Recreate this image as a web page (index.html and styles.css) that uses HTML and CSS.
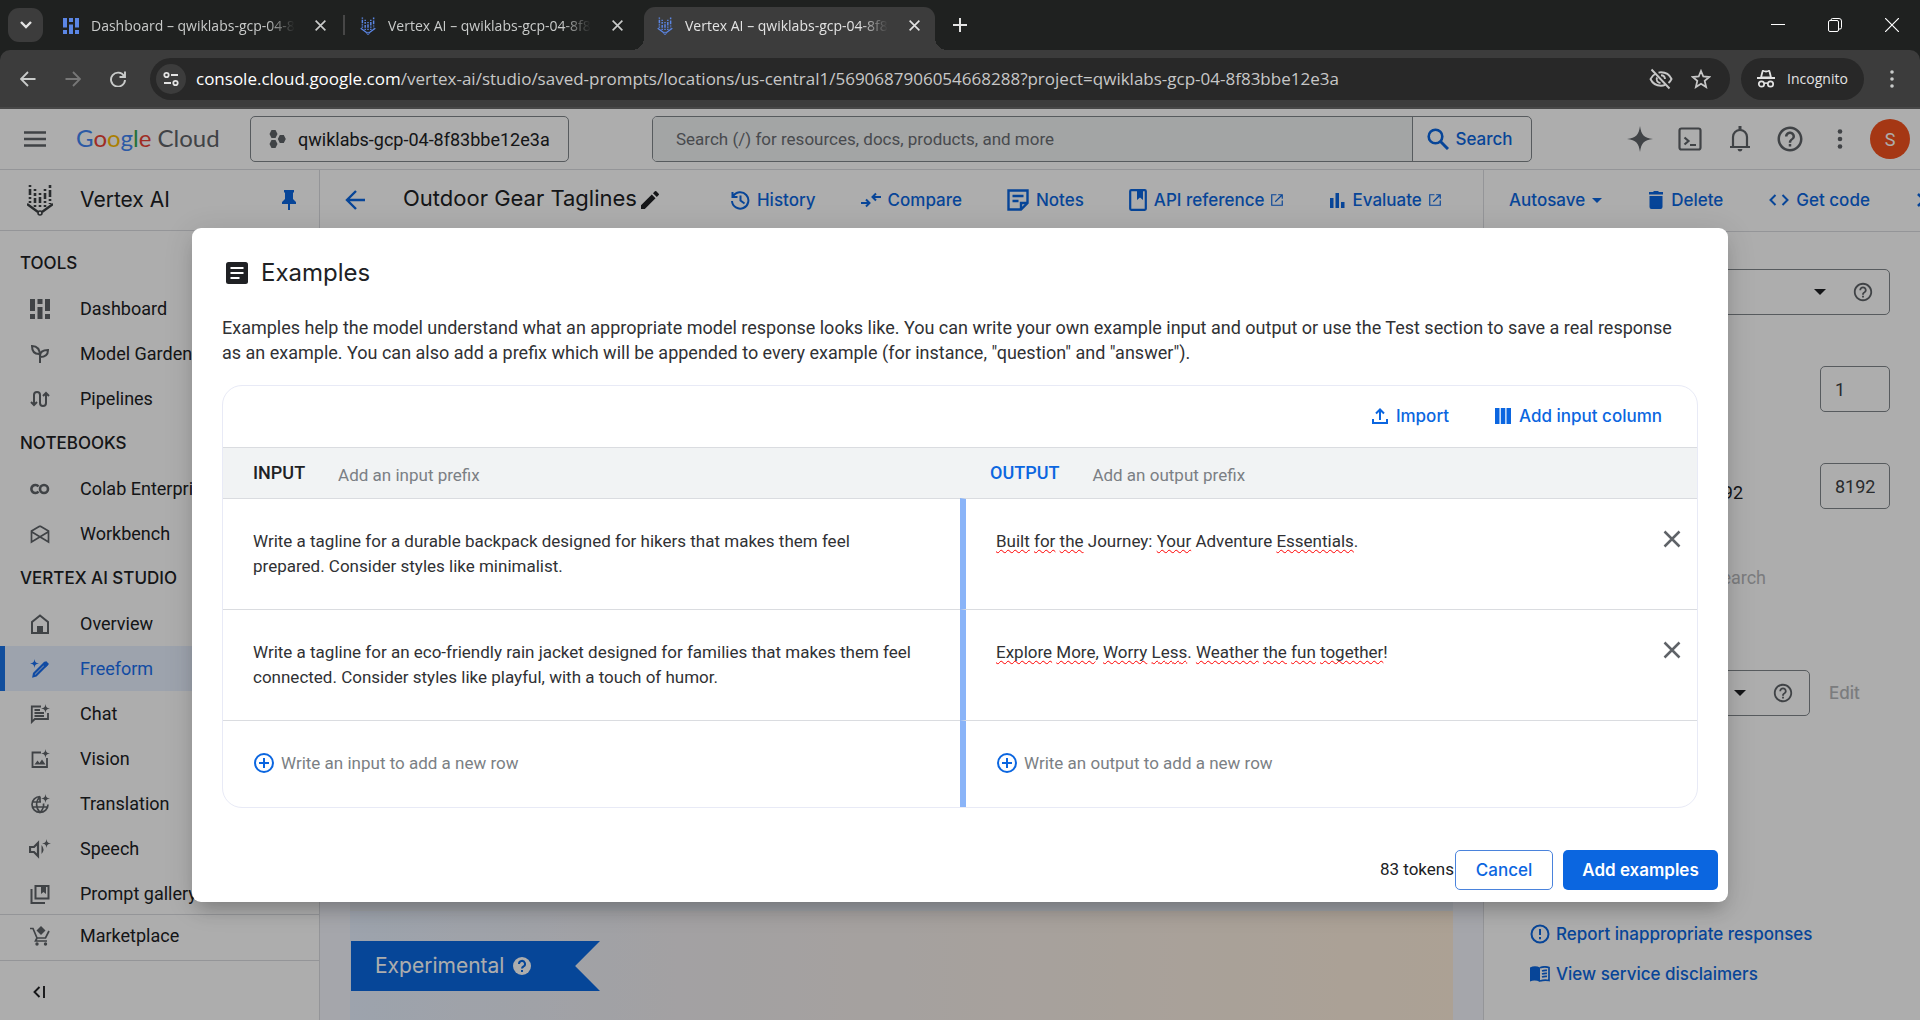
FILE: index.html
```html
<!DOCTYPE html>
<html lang="en">
<head>
<meta charset="utf-8">
<title>Vertex AI – qwiklabs-gcp-04-8f83bbe12e3a</title>
<link rel="stylesheet" href="styles.css">
</head>
<body>
<svg class="sprite" aria-hidden="true">
  <symbol id="i-x" viewBox="0 0 16 16"><path d="M2 2l12 12M14 2L2 14" fill="none" stroke="currentColor" stroke-width="2"/></symbol>
  <symbol id="i-help" viewBox="0 0 24 24"><path fill="currentColor" d="M11 18h2v-2h-2v2zm1-16C6.480 2 2 6.480 2 12s4.480 10 10 10 10-4.480 10-10S17.520 2 12 2zm0 18c-4.410 0-8-3.590-8-8s3.590-8 8-8 8 3.590 8 8-3.590 8-8 8zm0-14c-2.210 0-4 1.790-4 4h2c0-1.100.9-2 2-2s2 .9 2 2c0 2-3 1.750-3 5h2c0-2.250 3-2.500 3-5 0-2.210-1.790-4-4-4z"/></symbol>
  <symbol id="i-open" viewBox="0 0 24 24"><path fill="currentColor" d="M20 20H4V4h7V2H2v20h20v-9h-2v7zM14 2v2h4.600L8.300 14.300l1.400 1.400L20 5.400V10h2V2h-8z"/></symbol>
  <symbol id="i-caret" viewBox="0 0 12 6"><path fill="currentColor" d="M0 0h12L6 6z"/></symbol>
  <symbol id="i-plus" viewBox="0 0 20 20"><circle cx="10" cy="10" r="9" fill="none" stroke="currentColor" stroke-width="2"/><path d="M10 5v10M5 10h10" stroke="currentColor" stroke-width="2"/></symbol>
  <symbol id="i-dash" viewBox="0 0 20 20"><path fill="currentColor" d="M0 0h5v12H0zM0 15h5v5H0zM7.500 0h5v5h-5zM7.500 8h5v12h-5zM15 0h5v12h-5zM15 15h5v5h-5z"/></symbol>
  <symbol id="i-vertex" viewBox="0 0 26 32"><g fill="none" stroke="currentColor" stroke-width="2.600"><path d="M3 1v19" stroke-dasharray="2 2 6 2 2 2 2 2"/><path d="M8 5v18" stroke-dasharray="2 2 3 2 5 2"/><path d="M13 9v15" stroke-dasharray="2 2 6 2"/><path d="M18 5v18" stroke-dasharray="2 2 6 2 2 2"/><path d="M23 1v19" stroke-dasharray="3 2 7 2 2 2"/><path d="M0 20l11 8M26 20l-11 8" stroke-width="2.400"/><circle cx="13" cy="29" r="2" stroke-width="1.600"/></g></symbol>
  <symbol id="i-spark" viewBox="0 0 10 10"><path fill="currentColor" d="M5 0C5.500 3.500 6.500 4.500 10 5 6.500 5.500 5.500 6.500 5 10 4.500 6.500 3.500 5.500 0 5 3.500 4.500 4.500 3.500 5 0z"/></symbol>
</svg>

<header class="browser">
  <div class="tabstrip">
    <button class="tab-search" aria-label="Search tabs"><svg width="12" height="8" viewBox="0 0 12 8"><path d="M1 1l5 5 5-5" fill="none" stroke="currentColor" stroke-width="2.400"/></svg></button>
    <div class="tabs">
      <div class="tab"><svg class="fav" width="16" height="18"><use href="#i-dash"/></svg><span class="tab-title">Dashboard – qwiklabs-gcp-04-8</span><button aria-label="Close tab"><svg width="13" height="13"><use href="#i-x"/></svg></button></div>
      <div class="tab divided"><svg class="fav" width="16" height="18"><use href="#i-vertex"/></svg><span class="tab-title">Vertex AI – qwiklabs-gcp-04-8f8</span><button aria-label="Close tab"><svg width="13" height="13"><use href="#i-x"/></svg></button></div>
      <div class="tab active"><svg class="fav" width="16" height="18"><use href="#i-vertex"/></svg><span class="tab-title">Vertex AI – qwiklabs-gcp-04-8f8</span><button aria-label="Close tab"><svg width="13" height="13"><use href="#i-x"/></svg></button></div>
    </div>
    <button class="new-tab" aria-label="New tab"><svg width="14" height="14" viewBox="0 0 14 14"><path d="M7 0v14M0 7h14" stroke="currentColor" stroke-width="2"/></svg></button>
    <div class="window-controls">
      <button aria-label="Minimize"><svg width="14" height="14" viewBox="0 0 14 14"><path d="M0 6.500h14" stroke="currentColor"/></svg></button>
      <button aria-label="Restore"><svg width="14" height="14" viewBox="0 0 14 14"><g fill="none" stroke="currentColor"><rect x=".5" y="2.500" width="10" height="11" rx="1.500"/><path d="M3 2.500V2Q3 .5 4.500 .5H11Q13.500 .5 13.500 3v6.500q0 1.500-1.500 1.500h-1"/></g></svg></button>
      <button aria-label="Close"><svg width="14" height="14" viewBox="0 0 14 14"><path d="M0 0l14 14M14 0L0 14" stroke="currentColor" stroke-width="1.200"/></svg></button>
    </div>
  </div>
  <div class="toolbar">
    <button aria-label="Back"><svg width="16" height="16" viewBox="0 0 16 16"><path d="M15.500 8H1.500M8 1L1 8l7 7" fill="none" stroke="currentColor" stroke-width="1.800"/></svg></button>
    <button aria-label="Forward" disabled><svg width="16" height="16" viewBox="0 0 16 16"><path d="M.5 8h14M8 1l7 7-7 7" fill="none" stroke="currentColor" stroke-width="1.800"/></svg></button>
    <button aria-label="Reload"><svg width="16" height="16" viewBox="0 0 16 16"><path d="M14 5A7 7 0 1 0 15 9M15 .5V6H9.500" fill="none" stroke="currentColor" stroke-width="1.900"/></svg></button>
    <div class="omnibox">
      <button class="site-info" aria-label="Site information"><svg width="16" height="16" viewBox="0 0 16 16"><g fill="none" stroke="currentColor" stroke-width="1.800"><circle cx="3.500" cy="4" r="2.200"/><path d="M8 4h7M1 12h7"/><circle cx="12.500" cy="12" r="2.200"/></g></svg></button>
      <span class="url"><b>console.cloud.google.com</b>/vertex-ai/studio/saved-prompts/locations/us-central1/5690687906054668288?project=qwiklabs-gcp-04-8f83bbe12e3a</span>
      <button aria-label="Third-party cookies blocked"><svg width="24" height="22" viewBox="0 0 24 22"><g fill="none" stroke="currentColor" stroke-width="1.900"><path d="M7 5.500C4.500 6.700 2.500 8.600 1.500 11c1.800 4 5.800 6.700 10.500 6.700 1.600 0 3-.3 4.300-.8M9.500 4.600c.8-.2 1.600-.3 2.500-.3 4.700 0 8.700 2.700 10.500 6.700-.7 1.600-1.700 2.900-3 4"/><path d="M8 9.500c-1.200 2.600.6 5.300 3.500 5.500M12 7.200c2.300 0 3.900 1.600 4 3.800M2.500 1.500l18 19"/></g></svg></button>
      <button aria-label="Bookmark this tab"><svg width="20" height="20" viewBox="0 0 20 20"><path d="M10 2l2.300 5.500 6 .5-4.600 3.900L15.100 18 10 14.700 4.900 18l1.400-6.100L1.700 8l6-.5z" fill="none" stroke="currentColor" stroke-width="1.800"/></svg></button>
    </div>
    <button class="incognito"><svg width="18" height="18" viewBox="0 0 18 18"><path d="M4 7.500L5.500 1.500q.2-.9 1.200-.6L9 1.500l2.300-.6q1-.3 1.200.6L14 7.500z" fill="none" stroke="currentColor" stroke-width="1.800"/><path d="M0 8h18" stroke="currentColor" stroke-width="2"/><g fill="none" stroke="currentColor" stroke-width="1.700"><circle cx="4.500" cy="14" r="2.700"/><circle cx="13.500" cy="14" r="2.700"/><path d="M7 13.500q2-1 4 0"/></g></svg>Incognito</button>
    <button aria-label="Browser menu"><svg width="4" height="18" viewBox="0 0 4 18"><g fill="currentColor"><circle cx="2" cy="2" r="1.800"/><circle cx="2" cy="9" r="1.800"/><circle cx="2" cy="16" r="1.800"/></g></svg></button>
  </div>
</header>

<div class="page">
  <header class="cloudbar">
    <button class="menu" aria-label="Main menu"><svg width="22" height="16" viewBox="0 0 22 16"><path d="M0 1.500h22M0 8h22M0 14.500h22" stroke="currentColor" stroke-width="2.400"/></svg></button>
    <a class="logo" href="#" aria-label="Google Cloud"><span class="g">G</span><span class="r">o</span><span class="y">o</span><span class="g">g</span><span class="n">l</span><span class="r">e</span> Cloud</a>
    <button class="project"><svg width="17" height="18" viewBox="0 0 17 18"><path fill="currentColor" d="M2.500 0h4L8.500 4l-2 4h-4L.5 4zM2.500 10h4l2 4-2 4h-4l-2-4zM10.800 5h4l2 4-2 4h-4l-2-4z"/></svg>qwiklabs-gcp-04-8f83bbe12e3a</button>
    <form class="search">
      <input type="search" aria-label="Search" placeholder="Search (/) for resources, docs, products, and more">
      <button type="button"><svg width="22" height="22" viewBox="0 0 22 22"><circle cx="8.500" cy="8.500" r="6.800" fill="none" stroke="currentColor" stroke-width="2.600"/><path d="M13 13l8 8" stroke="currentColor" stroke-width="3"/></svg>Search</button>
    </form>
    <div class="utilities">
      <button aria-label="Gemini"><svg width="26" height="28" viewBox="0 0 10 10"><use href="#i-spark"/></svg></button>
      <button aria-label="Cloud Shell"><svg width="24" height="24" viewBox="0 0 24 24"><g fill="none" stroke="currentColor" stroke-width="2.200"><rect x="1.500" y="1.500" width="21" height="21" rx="2"/><path d="M6.500 10.500l4 3.500-4 3.500M12 18h6"/></g></svg></button>
      <button aria-label="Notifications"><svg width="22" height="26" viewBox="0 0 22 26"><path d="M4 21V11a7 7 0 0 1 14 0v10M1 21h20" fill="none" stroke="currentColor" stroke-width="2.200"/><path fill="currentColor" d="M9.500 0h3v4h-3zM8.500 23h5q-.5 2.500-2.500 2.500T8.500 23z"/></svg></button>
      <button aria-label="Help"><svg width="30" height="30"><use href="#i-help"/></svg></button>
      <button aria-label="More options"><svg width="6" height="20" viewBox="0 0 6 20"><g fill="currentColor"><circle cx="3" cy="2.500" r="2.300"/><circle cx="3" cy="10" r="2.300"/><circle cx="3" cy="17.500" r="2.300"/></g></svg></button>
    </div>
    <button class="avatar" aria-label="Account">S</button>
  </header>

  <div class="body">
    <aside class="sidebar">
      <div class="product"><svg width="26" height="32"><use href="#i-vertex"/></svg><h2>Vertex AI</h2><button aria-label="Unpin menu"><svg width="14" height="20" viewBox="0 0 14 20"><path fill="currentColor" d="M2 0h10v2l-1 1v6l3 3v2H8v6H6v-6H0v-2l3-3V3L2 2z"/></svg></button></div>
      <nav>
        <h3>TOOLS</h3>
        <a href="#"><svg width="20" height="20"><use href="#i-dash"/></svg>Dashboard</a>
        <a href="#"><svg width="20" height="20" viewBox="0 0 20 20"><g fill="none" stroke="currentColor" stroke-width="2"><path d="M10 19v-7C10 5 7 2 2 2c0 6 3 8 7 8M10 12c0-4 3-6 8-6 0 5-3 7-8 7"/></g></svg>Model Garden</a>
        <a href="#"><svg width="20" height="20" viewBox="0 0 20 20"><g fill="none" stroke="currentColor" stroke-width="2"><path d="M4 16V6a3 3 0 0 1 6 0v8a3 3 0 0 0 6 0V4M1 13l3 3 3-3M13 7l3-3 3 3"/></g></svg>Pipelines</a>
        <h3>NOTEBOOKS</h3>
        <a href="#"><svg width="20" height="20" viewBox="0 0 20 20"><g fill="none" stroke="currentColor" stroke-width="2.600"><path d="M8.500 7.500A4 4 0 1 0 8.500 12.500"/><circle cx="14" cy="10" r="4"/></g></svg>Colab Enterprise</a>
        <a href="#"><svg width="20" height="20" viewBox="0 0 20 20"><path d="M10 2l8.500 5v11L2 8M10 2L1.500 7v11L18 8" fill="none" stroke="currentColor" stroke-width="1.700"/></svg>Workbench</a>
        <h3>VERTEX AI STUDIO</h3>
        <a href="#"><svg width="20" height="20" viewBox="0 0 20 20"><path d="M2 19V8l8-6.500L18 8v11z" fill="none" stroke="currentColor" stroke-width="2"/><path fill="currentColor" d="M7 12h6v7H7z"/></svg>Overview</a>
        <a href="#" class="current" aria-current="page"><svg width="20" height="20" viewBox="0 0 20 20"><path d="M4 14.500L14.500 4l2 2L6 16.500l-2.500.7z" fill="none" stroke="currentColor" stroke-width="2.200"/><path d="M12.500 5.500L16 2l3 3-3.500 3.500z" fill="currentColor"/><use href="#i-spark" x="0" y="0" width="9" height="9"/></svg>Freeform</a>
        <a href="#"><svg width="20" height="20" viewBox="0 0 20 20"><path d="M11 2.500H1.800V18l3-3H18V9M4.500 6H10M4.500 9H14M4.500 12H14" fill="none" stroke="currentColor" stroke-width="1.800"/><use href="#i-spark" x="11" y="0" width="9" height="9"/></svg>Chat</a>
        <a href="#"><svg width="20" height="20" viewBox="0 0 20 20"><path d="M11 3.500H2.500V18H17V9" fill="none" stroke="currentColor" stroke-width="1.800"/><path d="M4.500 15.500l3-4 2 2.500 2.500-3.500 3.500 5z" fill="currentColor"/><use href="#i-spark" x="11" y="0" width="9" height="9"/></svg>Vision</a>
        <a href="#"><svg width="20" height="20" viewBox="0 0 20 20"><g fill="none" stroke="currentColor" stroke-width="1.700"><path d="M10 2.500a8 8 0 1 0 8 8M2 8h9M2 13h15M10 2.500c-4.500 5-4.500 11 0 16 3-3 4-6 3.500-9M10 2.500V8"/></g><use href="#i-spark" x="11" y="0" width="9" height="9"/></svg>Translation</a>
        <a href="#"><svg class="speech" width="22" height="20" viewBox="0 0 22 20"><path d="M1 8h4l4-4v13l-4-4H1z" fill="none" stroke="currentColor" stroke-width="2.200"/><path d="M12.500 6q4 4.500 0 9z" fill="currentColor"/><use href="#i-spark" x="13" y="0" width="9" height="9"/></svg>Speech</a>
        <a href="#"><svg width="20" height="20" viewBox="0 0 20 20"><path d="M5.500 2h13v12.500h-13zM1.500 5v14H15" fill="none" stroke="currentColor" stroke-width="2"/><path d="M11 2h5v8l-2.500-2L11 10z" fill="currentColor"/></svg>Prompt gallery</a>
      </nav>
      <a href="#" class="market"><svg width="20" height="20" viewBox="0 0 20 20"><path d="M0 2.500h3L7 12h8.500l3.500-7M7 12l-1.500 3H17" fill="none" stroke="currentColor" stroke-width="1.700"/><path d="M11 0l4.500 4.500L11 9 6.500 4.500z" fill="currentColor"/><circle cx="7" cy="18" r="1.700" fill="currentColor"/><circle cx="15.500" cy="18" r="1.700" fill="currentColor"/></svg>Marketplace</a>
      <button class="collapse" aria-label="Collapse menu"><svg width="12" height="12" viewBox="0 0 12 12"><path d="M6.500 1L1.500 6l5 5M11 0v12" fill="none" stroke="currentColor" stroke-width="1.900"/></svg></button>
    </aside>

    <div class="content">
      <div class="actionbar">
        <div class="left">
          <button aria-label="Back" class="back"><svg width="20" height="20" viewBox="0 0 20 20"><path d="M20 10H2M11 1l-9 9 9 9" fill="none" stroke="currentColor" stroke-width="2.400"/></svg></button>
          <h1>Outdoor Gear Taglines</h1>
          <button class="rename" aria-label="Rename"><svg width="18" height="18" viewBox="0 0 18 18"><path fill="currentColor" d="M0 14.200V18h3.800L14.500 7.200l-3.700-3.700zM17.700 4.100q.6-.7 0-1.400L15.300.3q-.7-.6-1.400 0L12 2.200 15.800 6z"/></svg></button>
          <div class="actions">
            <button><svg width="20" height="20" viewBox="0 0 20 20"><path d="M3 6.500A8.200 8.200 0 1 1 2 11M2.500 2v5h5M10.500 5.500v5l4 3" fill="none" stroke="currentColor" stroke-width="2"/></svg>History</button>
            <button><svg width="20" height="16" viewBox="0 0 20 16"><path d="M0 11h8M5 7.500L8.500 11 5 14.500M20 5h-8M15 1.500L11.500 5 15 8.500" fill="none" stroke="currentColor" stroke-width="2"/></svg>Compare</button>
            <button><svg width="22" height="22" viewBox="0 0 22 22"><path d="M14 20.500H1.500v-19h19V14zM14 20.500V14h6.500M5.500 7h11M5.500 12h6" fill="none" stroke="currentColor" stroke-width="2.400"/></svg>Notes</button>
            <button><svg width="18" height="22" viewBox="0 0 18 22"><rect x="1.200" y="1.200" width="15.600" height="19.600" rx="1" fill="none" stroke="currentColor" stroke-width="2.200"/><path d="M8 1h6v10l-3-2.500L8 11z" fill="currentColor"/></svg>API reference<svg class="ext" width="14" height="14"><use href="#i-open"/></svg></button>
            <button><svg width="16" height="16" viewBox="0 0 16 16"><path d="M1 6h3.500v10H1zM6.500 1H10v15H6.500zM12 10h3.500v6H12z" fill="currentColor"/></svg>Evaluate<svg class="ext" width="14" height="14"><use href="#i-open"/></svg></button>
          </div>
        </div>
        <div class="right">
          <button>Autosave<svg width="10" height="5"><use href="#i-caret"/></svg></button>
          <button><svg width="16" height="18" viewBox="0 0 16 18"><path fill="currentColor" d="M1 1h4l1-1h4l1 1h4v2.500H1zM1.500 5h13v11q0 2-2 2h-9q-2 0-2-2z"/></svg>Delete</button>
          <button><svg width="20" height="12" viewBox="0 0 20 12"><path d="M6.500 1l-5 5 5 5M13.500 1l5 5-5 5" fill="none" stroke="currentColor" stroke-width="2"/></svg>Get code</button>
          <button aria-label="Show more"><svg width="10" height="14" viewBox="0 0 10 14"><path d="M2 1l6 6-6 6" fill="none" stroke="currentColor" stroke-width="2.600"/></svg></button>
        </div>
      </div>
      <div class="workspace">
        <main>
          <div class="prompt"></div>
          <div class="response"><div class="ribbon">Experimental<svg width="20" height="20" viewBox="0 0 20 20"><circle cx="10" cy="10" r="9" fill="currentColor"/><path d="M7 8a3 3 0 1 1 4.500 2.500Q10 11.300 10 12.500M10 14v2" fill="none" stroke="#0a68e1" stroke-width="2"/></svg></div></div>
        </main>
        <aside class="settings">
          <div class="field"><select aria-label="Model"><option></option></select><svg width="12" height="6"><use href="#i-caret"/></svg><button aria-label="Model help"><svg width="22" height="22"><use href="#i-help"/></svg></button></div>
          <div class="row"><input type="text" aria-label="Temperature" value="1"></div>
          <div class="row"><label for="limit">8192</label><input type="text" id="limit" value="8192"></div>
          <p class="disabled">Search</p>
          <div class="safety"><div class="field"><select aria-label="Safety"><option></option></select><svg width="12" height="6"><use href="#i-caret"/></svg><button aria-label="Safety help"><svg width="22" height="22"><use href="#i-help"/></svg></button></div><button class="edit" disabled>Edit</button></div>
          <a href="#"><svg width="20" height="20" viewBox="0 0 20 20"><circle cx="10" cy="10" r="8.500" fill="none" stroke="currentColor" stroke-width="2"/><path d="M10 5v6M10 13v2.200" stroke="currentColor" stroke-width="2"/></svg>Report inappropriate responses</a>
          <a href="#"><svg width="20" height="16" viewBox="0 0 20 16"><path fill="currentColor" d="M0 1.500Q5-1 10 1.500V16Q5 13.500 0 15.500z"/><path d="M10 1.800q4.500-1.800 9-.3v13q-4.500-1-9 .5M12 5q2.500-1 5-.6M12 8q2.500-1 5-.6M12 11q2.500-1 5-.6" fill="none" stroke="currentColor" stroke-width="1.700"/></svg>View service disclaimers</a>
        </aside>
      </div>
    </div>
  </div>

  <div class="scrim">
    <section class="dialog" role="dialog" aria-modal="true" aria-labelledby="dialog-title">
      <header><svg width="24" height="24" viewBox="0 0 24 24"><rect width="22" height="22" x="1" y="1" rx="2.500" fill="currentColor"/><path d="M5.500 7h13M5.500 12h13M5.500 17h9" stroke="#fff" stroke-width="2.200"/></svg><h2 id="dialog-title">Examples</h2></header>
      <p>Examples help the model understand what an appropriate model response looks like. You can write your own example input and output or use the Test section to save a real response as an example. You can also add a prefix which will be appended to every example (for instance, "question" and "answer").</p>
      <div class="card">
        <div class="card-actions">
          <button><svg width="16" height="16" viewBox="0 0 16 16"><path d="M1 11v4h14v-4M8 12V2M4 5.500l4-4 4 4" fill="none" stroke="currentColor" stroke-width="2"/></svg>Import</button>
          <button><svg width="16" height="16" viewBox="0 0 16 16"><path d="M0 0h4.500v16H0zM5.800 0h4.500v16H5.800zM11.500 0H16v16h-4.500z" fill="currentColor"/></svg>Add input column</button>
        </div>
        <table>
          <thead><tr>
            <th scope="col"><div><label for="in-prefix">INPUT</label><input id="in-prefix" type="text" placeholder="Add an input prefix"></div></th>
            <th scope="col"><div class="output"><label for="out-prefix">OUTPUT</label><input id="out-prefix" type="text" placeholder="Add an output prefix"></div></th>
          </tr></thead>
          <tbody>
            <tr>
              <td><textarea rows="2" aria-label="Input 1">Write a tagline for a durable backpack designed for hikers that makes them feel prepared. Consider styles like minimalist.</textarea></td>
              <td><div class="cell"><div class="text" role="textbox" aria-label="Output 1" contenteditable="true" spellcheck="false"><u>Built</u> <u>for</u> <u>the</u> Journey: <u>Your</u> Adventure <u>Essentials</u>.</div><button aria-label="Remove row"><svg width="20" height="20"><use href="#i-x"/></svg></button></div></td>
            </tr>
            <tr>
              <td><textarea rows="2" aria-label="Input 2">Write a tagline for an eco-friendly rain jacket designed for families that makes them feel connected. Consider styles like playful, with a touch of humor.</textarea></td>
              <td><div class="cell"><div class="text" role="textbox" aria-label="Output 2" contenteditable="true" spellcheck="false"><u>Explore</u> <u>More</u>, <u>Worry</u> <u>Less</u>. <u>Weather</u> <u>the</u> <u>fun</u> <u>together</u>!</div><button aria-label="Remove row"><svg width="20" height="20"><use href="#i-x"/></svg></button></div></td>
            </tr>
            <tr class="add">
              <td><div><svg width="22" height="20"><use href="#i-plus"/></svg><input type="text" aria-label="New input" placeholder="Write an input to add a new row"></div></td>
              <td><div><svg width="22" height="20"><use href="#i-plus"/></svg><input type="text" aria-label="New output" placeholder="Write an output to add a new row"></div></td>
            </tr>
          </tbody>
        </table>
      </div>
      <footer><span>83 tokens</span><button class="cancel">Cancel</button><button class="primary">Add examples</button></footer>
    </section>
  </div>
</div>
</body>
</html>
```
FILE: styles.css
```css
:root {
  --blue: #0b66e0;
  --ink: #202124;
  --grey: #5f6368;
  --line: #dadce0;
  --ui: Roboto, "Liberation Sans", sans-serif;
  --display: Inter, Roboto, sans-serif;
}
* { box-sizing: border-box; }
body {
  margin: 0;
  height: 100vh;
  display: flex;
  flex-direction: column;
  overflow: hidden;
  font: 18px/25px var(--ui);
  color: var(--ink);
}
button, input, select, textarea { font: inherit; color: inherit; background: none; border: 0; padding: 0; margin: 0; outline: 0; }
button { display: inline-flex; align-items: center; justify-content: center; white-space: nowrap; flex: none; }
a { color: inherit; text-decoration: none; }
h1, h2, h3, p { margin: 0; font-weight: 400; }
svg { flex: none; display: block; }
.sprite { position: absolute; width: 0; height: 0; }

/* browser frame */
.browser { background: #1f2120; color: #e3e3e3; font: 14px/20px "Open Sans", "Noto Sans", sans-serif; flex: none; }
.tabstrip { height: 50px; display: flex; padding-left: 8px; }
.tab-search { width: 35px; height: 34px; margin: 8px 7px 0 0; border-radius: 11px; background: #3c3c3c; }
.tabs { display: flex; gap: 6px; align-items: flex-end; }
.tab { position: relative; width: 291px; height: 43px; display: flex; align-items: center; padding: 0 14px 6px 13px; border-radius: 11px 11px 0 0; color: #c9cbca; }
.tab .fav { color: #5b86e5; margin-right: 12px; }
.tab-title { white-space: nowrap; mask-image: linear-gradient(90deg, #000 86%, transparent); }
.tab button { margin-left: auto; }
.tab.divided::before { content: ""; position: absolute; left: -4px; top: 8px; width: 2px; height: 20px; background: #474747; }
.tab.active { background: #3c3c3c; color: #e3e3e3; }
.tab.active::before, .tab.active::after { content: ""; position: absolute; bottom: 0; width: 12px; height: 12px; }
.tab.active::before { left: -12px; background: radial-gradient(circle at 0 0, transparent 12px, #3c3c3c 12px); }
.tab.active::after { right: -12px; background: radial-gradient(circle at 100% 0, transparent 12px, #3c3c3c 12px); }
.new-tab { width: 50px; height: 50px; }
.window-controls { margin-left: auto; display: flex; color: #fff; }
.window-controls button { width: 57px; height: 49px; }
.toolbar { height: 59px; display: flex; align-items: center; padding: 0 6px 0 5px; background: #3c3c3c; border-bottom: 2px solid #474747; border-radius: 10px 10px 0 0; }
.toolbar > button { width: 45px; height: 42px; color: #c9cbca; }
.toolbar > button:disabled { color: #777; }
.toolbar .omnibox { flex: 1; height: 42px; margin: 0 11px 0 10px; padding: 0 19px 0 6px; display: flex; align-items: center; gap: 18px; border-radius: 21px; background: #282828; color: #c7c7c7; }
.omnibox .site-info { width: 30px; height: 30px; border-radius: 15px; background: #3c3c3c; color: #e3e3e3; margin-right: -8px; }
.url { flex: 1; font-size: 17px; line-height: 24px; white-space: nowrap; }
.url b { font-weight: 400; color: #fff; }
.toolbar .incognito { width: 123px; gap: 12px; border-radius: 21px; background: #282828; color: #e3e3e3; }
.toolbar > .incognito + button { margin-left: 5px; }

/* cloud console header */
.page { position: relative; flex: 1; min-height: 0; display: flex; flex-direction: column; background: #fff; overflow: hidden; }
.cloudbar { height: 61px; flex: none; display: flex; align-items: center; padding: 0 10px 0 24px; border-bottom: 1px solid var(--line); color: var(--grey); }
.logo { width: 173px; padding: 0 0 2px 30px; font: 24px/30px Lato, var(--display); white-space: nowrap; }
.logo .g { color: #4285f4; } .logo .r { color: #ea4335; } .logo .y { color: #fbbc04; } .logo .n { color: #34a853; }
.project { height: 46px; width: 319px; margin-left: 31px; padding: 0 18px; gap: 12px; justify-content: flex-start; border: 1px solid #80868b; border-radius: 5px; color: var(--ink); }
.project svg { color: var(--grey); }
.search { flex: 0 1 880px; height: 46px; margin-left: 83px; display: flex; border: 1px solid #80868b; border-radius: 5px; overflow: hidden; }
.search input { flex: 1; min-width: 0; padding: 0 23px; background: #f1f3f4; font-size: 17px; }
.search input::placeholder { color: #6a6e73; opacity: 1; }
.search button { width: 119px; padding-right: 4px; gap: 6px; border-left: 1px solid #80868b; color: var(--blue); font: 500 17px/24px var(--display); }
.utilities { margin-left: auto; margin-right: 5px; display: flex; }
.utilities button { width: 50px; height: 50px; }
.avatar { width: 40px; height: 40px; border-radius: 50%; background: #f4511e; color: #fff; }

/* sidebar */
.body { flex: 1; min-height: 0; display: flex; }
.sidebar { width: 320px; flex: none; display: flex; flex-direction: column; border-right: 1px solid var(--line); }
.product { height: 61px; flex: none; display: flex; align-items: center; padding: 0 23px 0 27px; border-bottom: 1px solid var(--line); }
.product svg { color: #3c4043; }
.product h2 { flex: 1; padding-left: 27px; font: 21px/28px var(--display); }
.product button svg { color: var(--blue); }
nav { flex: 1; min-height: 0; overflow: hidden; padding-top: 10px; }
nav h3 { height: 45px; padding: 0 20px; font: 500 17px/45px var(--display); }
nav a, .market { height: 45px; display: flex; align-items: center; padding-left: 30px; gap: 30px; white-space: nowrap; }
nav a svg, .market svg { color: var(--grey); }
nav .speech { margin: 0 -1px; }
nav .current { background: #e7f0ff; color: #1a6ff0; border-left: 5px solid #1a73e8; padding-left: 25px; }
nav .current svg { color: #1a6ff0; }
.market { height: 47px; flex: none; border: solid var(--line); border-width: 1px 0; padding-bottom: 4px; }
.collapse { height: 59px; justify-content: flex-start; padding: 3px 33px 0; }

/* prompt editor */
.content { flex: 1; min-width: 0; display: flex; flex-direction: column; }
.actionbar { height: 62px; flex: none; display: flex; border-bottom: 1px solid var(--line); color: var(--blue); font: 500 17px/24px var(--display); }
.actionbar .left { flex: 1; min-width: 0; display: flex; align-items: center; padding: 0 0 1px 25px; }
.actionbar h1 { margin-left: 38px; padding-bottom: 5px; font: 22px/28px var(--display); color: var(--ink); white-space: nowrap; }
.rename { margin-left: 4px; color: var(--ink); }
.actions { margin-left: 71px; display: flex; gap: 45px; }
.actions button, .actionbar .right button { gap: 7px; }
.actions .ext { margin-left: -1px; }
.actionbar .right { width: 437px; display: flex; align-items: center; gap: 46px; padding: 0 0 1px 25px; border-left: 1px solid var(--line); overflow: hidden; }
.workspace { flex: 1; min-height: 0; display: flex; }
main { flex: 1; min-width: 0; padding: 0 30px; background: #f3f5fc; display: flex; flex-direction: column; }
.prompt { height: 679px; flex: none; background: #e8ecf4; }
.response { flex: 1; padding-top: 30px; background: linear-gradient(90deg, #e7f0ff, #f0eef0 30%, #feeedb); }
.ribbon { width: 249px; height: 50px; margin-left: 1px; padding-left: 24px; display: flex; align-items: center; gap: 8px; background: #0a68e1; color: #fff; font: 21px/28px var(--display); clip-path: polygon(0 0, 100% 0, 90% 50%, 100% 100%, 0 100%); }
.settings { width: 437px; flex: none; padding: 37px 30px 0 46px; border-left: 1px solid var(--line); display: flex; flex-direction: column; color: var(--ink); }
.field, .row input { height: 46px; border: 1px solid #80868b; border-radius: 5px; }
.field { display: flex; align-items: center; padding-right: 15px; }
.field select { flex: 1; min-width: 0; appearance: none; }
.field button { margin-left: 26px; color: var(--grey); }
.row { margin-top: 51px; display: flex; justify-content: flex-end; align-items: center; gap: 77px; }
.row input { width: 70px; padding: 0 14px; color: #3c4043; }
.row label { padding-top: 12px; }
.disabled { margin: 56px 124px 0 0; text-align: right; color: #b5b7ba; }
.safety { margin: 80px 0 206px; display: flex; }
.safety .field { flex: 1; }
.edit { width: 80px; padding-left: 19px; justify-content: flex-start; color: #b5b7ba; font: 500 17px/24px var(--display); }
.settings a { display: flex; align-items: center; gap: 6px; height: 24px; margin-bottom: 16px; color: var(--blue); font: 500 17px/24px var(--display); white-space: nowrap; }

/* examples dialog */
.scrim { position: absolute; inset: 0; display: flex; align-items: center; justify-content: center; background: rgba(0, 0, 0, .32); }
.dialog { width: 80%; padding: 29px 30px 12px; border-radius: 9px; background: #fff; box-shadow: 0 12px 18px -6px rgba(0, 0, 0, .2), 0 4px 30px rgba(0, 0, 0, .12); }
.dialog header { height: 32px; display: flex; align-items: center; gap: 12px; padding-left: 3px; }
.dialog h2 { font: 24px/32px var(--display); }
.dialog p { margin-top: 26px; padding-right: 10px; color: #303134; }
.card { margin-top: 20px; border: 1px solid #e8eaf6; border-radius: 20px; overflow: hidden; }
.card-actions { height: 61px; display: flex; justify-content: flex-end; gap: 46px; padding-right: 35px; }
.card-actions button { gap: 8px; color: var(--blue); font: 500 17px/24px var(--display); }
table { width: 100%; table-layout: fixed; border-collapse: separate; border-spacing: 0; font-size: 17px; }
th { height: 51px; padding: 0 30px; background: #f1f3f4; border-top: 1px solid var(--line); text-align: left; font-weight: 400; }
th div { display: flex; align-items: center; gap: 33px; height: 50px; }
th label { font-size: 18px; font-weight: 500; }
th .output label { color: var(--blue); }
th input { flex: 1; min-width: 0; padding-top: 5px; }
.dialog input::placeholder { color: #7b7f84; opacity: 1; }
td { height: 111px; padding: 30px 40px 0 30px; border-top: 1px solid var(--line); vertical-align: top; color: #303134; }
td + td { border-left: 6px solid #8ab4f8; padding-right: 14px; }
textarea { display: block; width: 100%; resize: none; overflow: hidden; }
.cell { display: flex; align-items: flex-start; }
.cell .text { flex: 1; outline: 0; }
.cell button { color: var(--grey); margin-right: 1px; }
u { text-decoration: underline wavy #f00 1px; text-underline-offset: 2px; text-decoration-skip-ink: none; }
.add td { height: 87px; }
.add div { display: flex; align-items: center; gap: 6px; }
.add svg { color: var(--blue); }
.add input { flex: 1; min-width: 0; }
.dialog footer { display: flex; align-items: center; justify-content: flex-end; margin: 42px -20px 0 0; font-size: 17px; }
.dialog footer button { height: 40px; border-radius: 5px; font: 500 17px/24px var(--display); }
.dialog .cancel { width: 98px; margin: 0 10px 0 1px; border: 1px solid #4a83dc; color: var(--blue); }
.dialog .primary { width: 155px; background: #0b66e0; color: #fff; font-weight: 600; }
```
